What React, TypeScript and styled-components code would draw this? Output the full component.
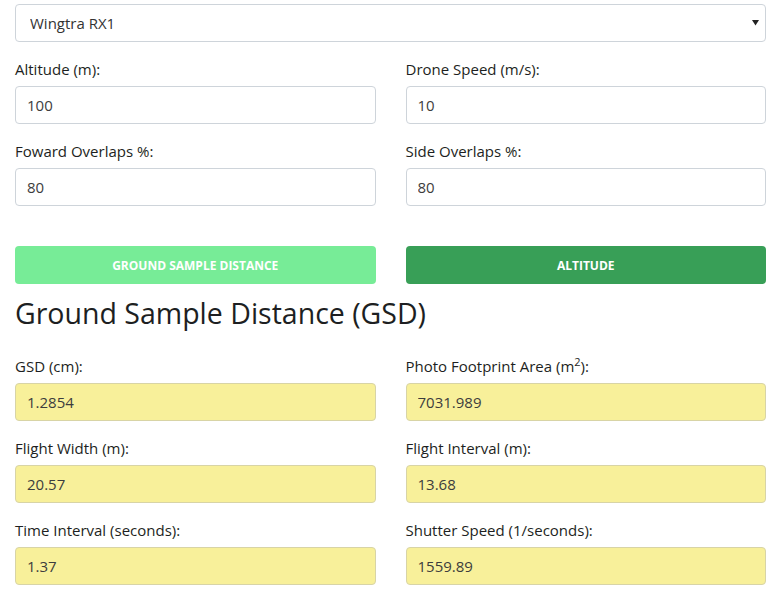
import React from "react";
import styled, { createGlobalStyle } from "styled-components";

const Global = createGlobalStyle`
  html, body { margin: 0; padding: 0; background: #ffffff; }
  body {
    font-family: "Open Sans", "Liberation Sans", sans-serif;
    font-size: 15px;
    color: #212529;
  }
  * { box-sizing: border-box; }
`;

const Page = styled.div`
  padding: 4px 15px 0;
`;

const SelectWrap = styled.div`
  position: relative;
  margin-bottom: 16px;
`;

const Select = styled.select`
  appearance: none;
  -webkit-appearance: none;
  width: 100%;
  height: 38px;
  padding: 0 30px 0 14px;
  font-family: inherit;
  font-size: 15px;
  color: #333;
  background: #fff;
  border: 1px solid #ced4da;
  border-radius: 4px;
  outline: none;
`;

const Caret = styled.svg`
  position: absolute;
  right: 7px;
  top: 16px;
  pointer-events: none;
`;

const Grid = styled.div`
  display: grid;
  grid-template-columns: 1fr 1fr;
  column-gap: 30px;
`;

const Group = styled.div`
  display: flex;
  flex-direction: column;
  margin-bottom: 16px;
`;

const Label = styled.label`
  display: block;
  font-size: 15px;
  line-height: 22px;
  font-weight: 500;
  color: #1d1f22;
  margin-bottom: 6px;
`;

const Input = styled.input<{ $result?: boolean }>`
  height: 38px;
  width: 100%;
  padding: 0 11px;
  font-family: inherit;
  font-size: 15px;
  color: #3d3d3d;
  background: ${(p) => (p.$result ? "#f8f09a" : "#ffffff")};
  border: 1px solid ${(p) => (p.$result ? "#d8d4a6" : "#ced4da")};
  border-radius: 4px;
  outline: none;
`;

const ButtonRow = styled(Grid)`
  margin-top: 24px;
  margin-bottom: 11px;
`;

const ModeButton = styled.button<{ $active?: boolean }>`
  height: 38px;
  border: none;
  border-radius: 4px;
  background: ${(p) => (p.$active ? "#77ec97" : "#389f57")};
  color: #ffffff;
  font-family: inherit;
  font-size: 12px;
  font-weight: 700;
  text-transform: uppercase;
  cursor: pointer;
`;

const Heading = styled.h2`
  margin: 0 0 24px;
  font-size: 28.5px;
  line-height: 36px;
  font-weight: 400;
  color: #1d1f22;
`;

type Field = { label: React.ReactNode; value: string };

const inputs: Field[] = [
  { label: "Altitude (m):", value: "100" },
  { label: "Drone Speed (m/s):", value: "10" },
  { label: "Foward Overlaps %:", value: "80" },
  { label: "Side Overlaps %:", value: "80" },
];

const Sup = styled.sup`
  font-size: 11px;
  line-height: 0;
`;

const results: Field[] = [
  { label: "GSD (cm):", value: "1.2854" },
  {
    label: (
      <>
        Photo Footprint Area (m<Sup>2</Sup>):
      </>
    ),
    value: "7031.989",
  },
  { label: "Flight Width (m):", value: "20.57" },
  { label: "Flight Interval (m):", value: "13.68" },
  { label: "Time Interval (seconds):", value: "1.37" },
  { label: "Shutter Speed (1/seconds):", value: "1559.89" },
];

export default function App() {
  return (
    <Page>
      <Global />
      <SelectWrap>
        <Select defaultValue="rx1">
          <option value="rx1">Wingtra RX1</option>
        </Select>
        <Caret width="7" height="6" viewBox="0 0 7 6">
          <polygon points="0,0 7,0 3.5,5.5" fill="#222" />
        </Caret>
      </SelectWrap>
      <Grid>
        {inputs.map((f, i) => (
          <Group key={i}>
            <Label>{f.label}</Label>
            <Input defaultValue={f.value} />
          </Group>
        ))}
      </Grid>
      <ButtonRow>
        <ModeButton $active>Ground Sample Distance</ModeButton>
        <ModeButton>Altitude</ModeButton>
      </ButtonRow>
      <Heading>Ground Sample Distance (GSD)</Heading>
      <Grid>
        {results.map((f, i) => (
          <Group key={i}>
            <Label>{f.label}</Label>
            <Input $result readOnly value={f.value} />
          </Group>
        ))}
      </Grid>
    </Page>
  );
}
